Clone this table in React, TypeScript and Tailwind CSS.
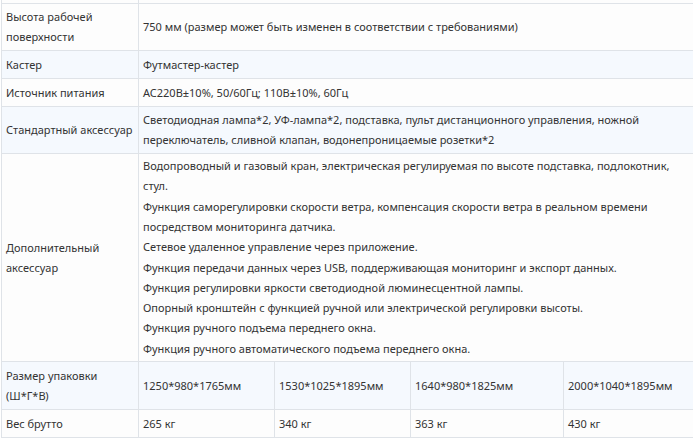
const extra = [
  "Водопроводный и газовый кран, электрическая регулируемая по высоте подставка, подлокотник,",
  "стул.",
  "Функция саморегулировки скорости ветра, компенсация скорости ветра в реальном времени",
  "посредством мониторинга датчика.",
  "Сетевое удаленное управление через приложение.",
  "Функция передачи данных через USB, поддерживающая мониторинг и экспорт данных.",
  "Функция регулировки яркости светодиодной люминесцентной лампы.",
  "Опорный кронштейн с функцией ручной или электрической регулировки высоты.",
  "Функция ручного подъема переднего окна.",
  "Функция ручного автоматического подъема переднего окна.",
];

const rows: { label: string[]; value: string[]; h: string; bg: string }[] = [
  { label: ["Высота рабочей", "поверхности"], value: ["750 мм (размер может быть изменен в соответствии с требованиями)"], h: "h-[47px]", bg: "bg-[#fdfdfd]" },
  { label: ["Кастер"], value: ["Футмастер-кастер"], h: "h-[28px]", bg: "bg-[#f5f9fe]" },
  { label: ["Источник питания"], value: ["AC220В±10%, 50/60Гц; 110В±10%, 60Гц"], h: "h-[28px]", bg: "bg-[#fdfdfd]" },
  {
    label: ["Стандартный аксессуар"],
    value: [
      "Светодиодная лампа*2, УФ-лампа*2, подставка, пульт дистанционного управления, ножной",
      "переключатель, сливной клапан, водонепроницаемые розетки*2",
    ],
    h: "h-[47px]",
    bg: "bg-[#f5f9fe]",
  },
];

const cell = "flex flex-col justify-center border-l border-t border-[#dfe3e8] px-[4px] whitespace-nowrap";

export default function App() {
  return (
    <div className="w-[700px] h-[438px] bg-white overflow-hidden text-[11px] leading-[20px] text-[#333]" style={{ fontFamily: '"Noto Sans", sans-serif' }}>
      <div className="ml-px w-[692px] grid grid-cols-[137px_136px_136px_153px_130px] border-b border-[#dfe3e8]">
        {/* tail of the previous row */}
        <div className="h-[3px] border-l border-[#dfe3e8] bg-[#fdfdfd]" />
        <div className="col-span-4 h-[3px] border-l border-[#dfe3e8] bg-[#fdfdfd]" />

        {rows.map((r) => (
          <div key={r.label[0]} className="contents">
            <div className={`${cell} ${r.h} ${r.bg}`}>
              {r.label.map((l) => <span key={l}>{l}</span>)}
            </div>
            <div className={`${cell} ${r.h} ${r.bg} col-span-4`}>
              {r.value.map((v) => <span key={v}>{v}</span>)}
            </div>
          </div>
        ))}

        <div className={`${cell} h-[208px] bg-[#fdfdfd]`}>
          <span>Дополнительный</span>
          <span>аксессуар</span>
        </div>
        <div className={`${cell} h-[208px] bg-[#fdfdfd] col-span-4 leading-[20.3px]`}>
          {extra.map((e) => <span key={e}>{e}</span>)}
        </div>

        <div className={`${cell} h-[48px] bg-[#f5f9fe]`}>
          <span>Размер упаковки</span>
          <span>(Ш*Г*В)</span>
        </div>
        {["1250*980*1765мм", "1530*1025*1895мм", "1640*980*1825мм", "2000*1040*1895мм"].map((s) => (
          <div key={s} className={`${cell} h-[48px] bg-[#f5f9fe]`}>{s}</div>
        ))}

        <div className={`${cell} h-[28px] bg-[#fdfdfd]`}>Вес брутто</div>
        {["265 кг", "340 кг", "363 кг", "430 кг"].map((s) => (
          <div key={s} className={`${cell} h-[28px] bg-[#fdfdfd]`}>{s}</div>
        ))}
      </div>
    </div>
  );
}
